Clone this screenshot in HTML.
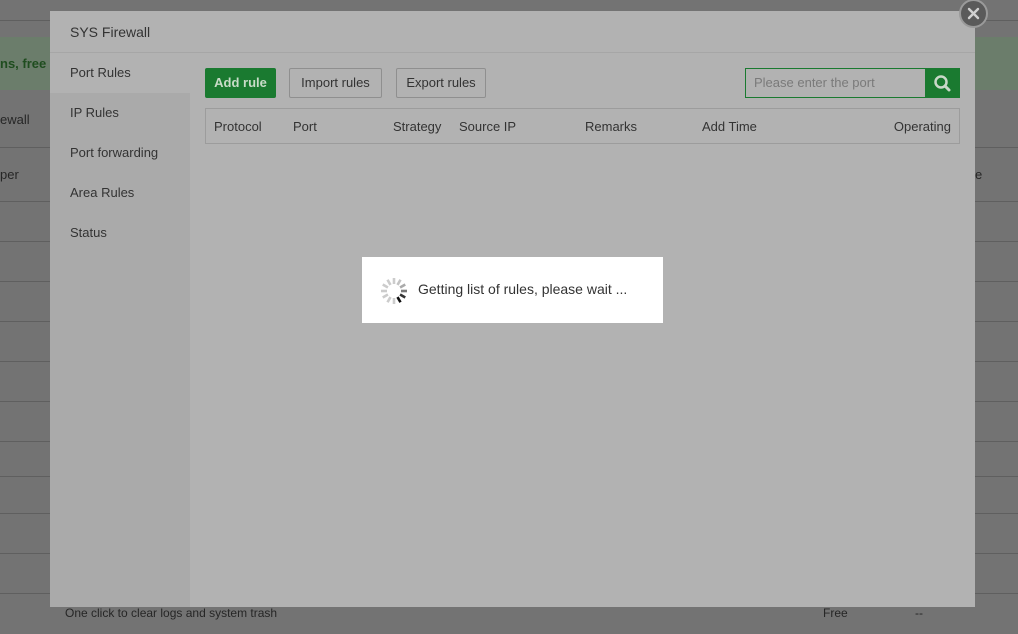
<!DOCTYPE html>
<html><head><meta charset="utf-8"><style>
*{margin:0;padding:0;box-sizing:border-box}
body{width:1018px;height:634px;overflow:hidden;background:#737373;font-family:"Liberation Sans",sans-serif;position:relative}
.hl{position:absolute;left:0;width:1018px;height:1px;background:#5f5f5f}
.bgt{position:absolute;font-size:13px;color:#262626}
.modal{position:absolute;left:50px;top:11px;width:925px;height:596px;background:#b2b2b2}
.hd{height:42px;border-bottom:1px solid #a6a6a6;padding-left:20px;line-height:42px;font-size:14px;color:#333}
.side{position:absolute;left:0;top:42px;width:140px;height:554px;background:#aaaaaa}
.side div{height:40px;line-height:40px;padding-left:20px;font-size:13px;color:#333}
.side .on{background:#b2b2b2}
.btn{position:absolute;top:57px;height:30px;line-height:28px;font-size:13px;border:1px solid #8f8f8f;border-radius:2px;color:#333;text-align:center}
.th{position:absolute;top:97px;left:155px;width:755px;height:36px;border:1px solid #9c9c9c;font-size:13px;color:#333}
.th span{position:absolute;top:10px}
</style></head><body>
<div class="hl" style="top:20px"></div>
<div style="position:absolute;left:0;top:37px;width:1018px;height:53px;background:#6b7d6b"></div>
<div class="bgt" style="left:0;top:56px;font-weight:bold;color:#1f4d1f">ns, free t</div>
<div class="hl" style="top:147px"></div>
<div class="bgt" style="left:0;top:112px">ewall</div>
<div class="bgt" style="left:0;top:167px">per</div>
<div class="bgt" style="left:975px;top:167px">e</div>
<div class="hl" style="top:201px"></div><div class="hl" style="top:241px"></div><div class="hl" style="top:281px"></div><div class="hl" style="top:321px"></div><div class="hl" style="top:361px"></div><div class="hl" style="top:401px"></div><div class="hl" style="top:441px"></div><div class="hl" style="top:476px"></div><div class="hl" style="top:513px"></div><div class="hl" style="top:553px"></div><div class="hl" style="top:593px"></div>
<div class="bgt" style="left:65px;top:606px;font-size:12px">One click to clear logs and system trash</div>
<div class="bgt" style="left:823px;top:606px;font-size:12px">Free</div>
<div class="bgt" style="left:915px;top:606px;font-size:12px">--</div>
<div class="modal">
<div class="hd">SYS Firewall</div>
<div class="side"><div class="on">Port Rules</div><div>IP Rules</div><div>Port forwarding</div><div>Area Rules</div><div>Status</div></div>
<div class="btn" style="left:155px;width:71px;background:#1a7a30;border-color:#1a7a30;color:#c8dcc8;font-weight:bold">Add rule</div>
<div class="btn" style="left:239px;width:93px">Import rules</div>
<div class="btn" style="left:346px;width:90px">Export rules</div>
<div style="position:absolute;left:695px;top:57px;width:181px;height:30px;border:1px solid #1a7a30;font-size:13px;color:#7a7a7a;line-height:28px;padding-left:8px">Please enter the port</div>
<div style="position:absolute;left:875px;top:57px;width:35px;height:30px;background:#1a7a30"><svg width="35" height="30"><circle cx="16" cy="14" r="5.5" fill="none" stroke="#c8d8c8" stroke-width="2.5"/><line x1="20" y1="18" x2="24" y2="22" stroke="#c8d8c8" stroke-width="3" stroke-linecap="round"/></svg></div>
<div class="th"><span style="left:8px">Protocol</span><span style="left:87px">Port</span><span style="left:187px">Strategy</span><span style="left:253px">Source IP</span><span style="left:379px">Remarks</span><span style="left:496px">Add Time</span><span style="right:8px">Operating</span></div>
</div>
<div style="position:absolute;left:959px;top:-1px;width:29px;height:29px;border-radius:50%;background:#5a5a5a;border:2px solid #9a9a9a"><svg width="25" height="25"><path d="M8 8L17 17M17 8L8 17" stroke="#d0d0d0" stroke-width="2.4" stroke-linecap="round"/></svg></div>
<div style="position:absolute;left:362px;top:257px;width:301px;height:66px;background:#fff">
<svg style="position:absolute;left:16px;top:18px" width="32" height="32" viewBox="0 0 32 32">
<g stroke-width="2.6" stroke-linecap="butt">
<line x1="16" y1="3" x2="16" y2="9" stroke="#ccc" transform="rotate(0 16 16)"/>
<line x1="16" y1="3" x2="16" y2="9" stroke="#c4c4c4" transform="rotate(30 16 16)"/>
<line x1="16" y1="3" x2="16" y2="9" stroke="#aaa" transform="rotate(60 16 16)"/>
<line x1="16" y1="3" x2="16" y2="9" stroke="#777" transform="rotate(90 16 16)"/>
<line x1="16" y1="3" x2="16" y2="9" stroke="#333" transform="rotate(120 16 16)"/>
<line x1="16" y1="3" x2="16" y2="9" stroke="#111" transform="rotate(150 16 16)"/>
<line x1="16" y1="3" x2="16" y2="9" stroke="#ccc" transform="rotate(180 16 16)"/>
<line x1="16" y1="3" x2="16" y2="9" stroke="#ccc" transform="rotate(210 16 16)"/>
<line x1="16" y1="3" x2="16" y2="9" stroke="#ccc" transform="rotate(240 16 16)"/>
<line x1="16" y1="3" x2="16" y2="9" stroke="#ccc" transform="rotate(270 16 16)"/>
<line x1="16" y1="3" x2="16" y2="9" stroke="#ccc" transform="rotate(300 16 16)"/>
<line x1="16" y1="3" x2="16" y2="9" stroke="#ccc" transform="rotate(330 16 16)"/>
</g></svg>
<div style="position:absolute;left:56px;top:24px;font-size:14px;color:#333">Getting list of rules, please wait ...</div>
</div>
</body></html>
